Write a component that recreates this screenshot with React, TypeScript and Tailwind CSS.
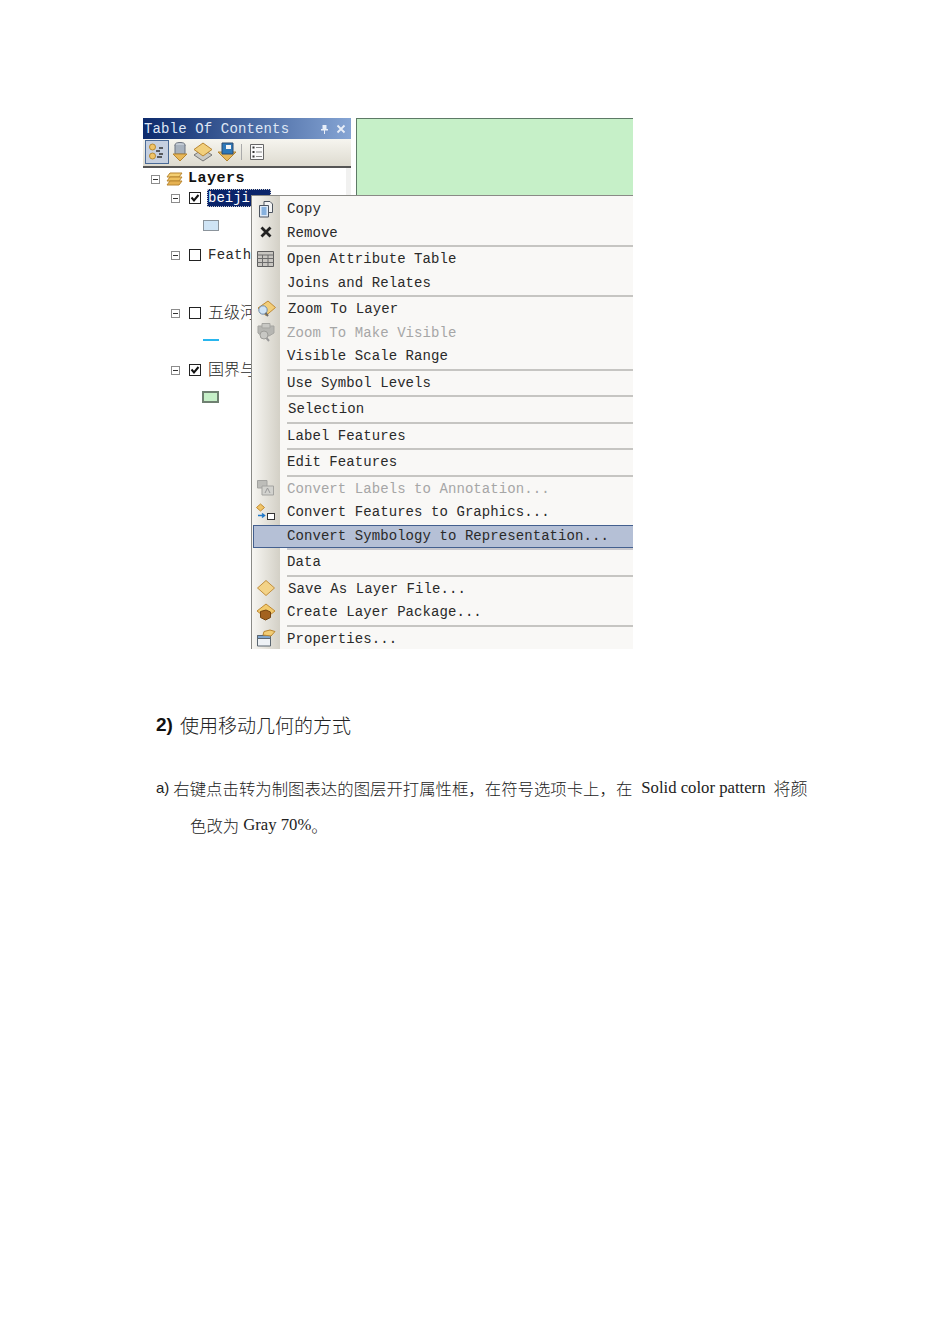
const mono = "font-['Liberation_Mono',monospace]";

function Plus() {
  return (
    <span className="flex h-[9px] w-[9px] items-center justify-center border border-[#8c8c8c] bg-white">
      <span className="h-px w-[5px] bg-[#333]" />
    </span>
  );
}

function Check({ on }: { on: boolean }) {
  return (
    <span className="flex h-[12px] w-[12px] items-center justify-center border border-[#222] bg-white">
      {on && (
        <svg width="10" height="10" viewBox="0 0 10 10">
          <path d="M1.5 4.5 L4 7.5 L8.5 2" fill="none" stroke="#111" strokeWidth="2" />
        </svg>
      )}
    </span>
  );
}

function TreeRow({ cls, on, children }: { cls: string; on: boolean; children: React.ReactNode }) {
  return (
    <div className={`flex items-center pl-[28px] ${cls}`}>
      <Plus />
      <span className="ml-[9px]"><Check on={on} /></span>
      <span className="ml-[7px] whitespace-nowrap">{children}</span>
    </div>
  );
}

const icons: Record<string, React.ReactNode> = {
  copy: (
    <svg width="18" height="18" viewBox="0 0 18 18">
      <path d="M7 1.5 H13 L15.5 4 V12.5 H7 Z" fill="#f3f3f3" stroke="#4d5560" />
      <path d="M2.5 5.5 H11.5 V17 H2.5 Z" fill="#dfeaf7" stroke="#4d5560" />
      <path d="M4.5 8 H9.5 M4.5 10 H9.5 M4.5 12 H9.5 M4.5 14 H9.5" stroke="#2f78c4" />
    </svg>
  ),
  remove: (
    <svg width="14" height="14" viewBox="0 0 14 14">
      <path d="M2.5 2.5 L11.5 11.5 M11.5 2.5 L2.5 11.5" stroke="#222" strokeWidth="2.8" />
    </svg>
  ),
  table: (
    <svg width="18" height="16" viewBox="0 0 18 16">
      <path d="M.5 .5 H16.5 V15.5 H.5 Z" fill="#c9c7c2" stroke="#5f5f5f" />
      <path d="M.5 4 H16.5 M.5 7.5 H16.5 M.5 11.5 H16.5 M5.5 4 V15.5 M11 4 V15.5" stroke="#6c6c6c" fill="none" />
    </svg>
  ),
  zoom: (
    <svg width="20" height="18" viewBox="0 0 20 18">
      <path d="M12 1 L19.5 7.5 L10 15.5 L2 8 Z" fill="#f2ce7a" stroke="#c08a34" />
      <circle cx="7" cy="10" r="4.2" fill="#cfe3f5" stroke="#6f8aa8" />
      <path d="M9.5 13 L12 16" stroke="#6a6a6a" strokeWidth="2" />
    </svg>
  ),
  zoomOff: (
    <svg width="20" height="20" viewBox="0 0 20 20">
      <path d="M2 4 H18 V11 L13 14 H6 L2 11 Z" fill="#b6b6b2" stroke="#a5a5a1" />
      <path d="M6 1.5 H14 V6 H6 Z" fill="#c8c8c4" stroke="#a5a5a1" />
      <circle cx="8" cy="13" r="4" fill="#c8c8c4" stroke="#9d9d99" />
      <path d="M10.5 16 L13 19" stroke="#999" strokeWidth="2" />
    </svg>
  ),
  annot: (
    <svg width="20" height="18" viewBox="0 0 20 18">
      <path d="M1.5 1.5 H11 V9 H1.5 Z" fill="#bdbdb9" stroke="#a3a3a0" />
      <path d="M6 7 H17.5 V16 H6 Z" fill="#d2d2ce" stroke="#a3a3a0" />
      <path d="M9 14 L11.5 9 L14 14" fill="none" stroke="#999" />
    </svg>
  ),
  graphics: (
    <svg width="20" height="18" viewBox="0 0 20 18">
      <path d="M4.5 1 L8.5 4.5 L4.5 8 L.5 4.5 Z" fill="#f0c468" stroke="#c08a30" />
      <path d="M2 12.5 H8 M6 10.5 L8.5 12.5 L6 14.5" fill="none" stroke="#1f78c8" strokeWidth="1.5" />
      <rect x="11.5" y="10.5" width="7" height="6" fill="#fff" stroke="#333" />
    </svg>
  ),
  save: (
    <svg width="20" height="18" viewBox="0 0 20 18">
      <path d="M10 1.5 L18.5 9 L10 16.5 L1.5 9 Z" fill="#f3d388" stroke="#c28f3c" />
    </svg>
  ),
  pkg: (
    <svg width="20" height="18" viewBox="0 0 20 18">
      <path d="M10 1 L19 8 L10 15 L1 8 Z" fill="#f2ca6c" stroke="#c08a34" />
      <path d="M4.5 8.5 L10 7 L14.5 9 V14.5 L9.5 17 L4.5 14.5 Z" fill="#a3621f" stroke="#74430f" />
    </svg>
  ),
  props: (
    <svg width="20" height="18" viewBox="0 0 20 18">
      <path d="M1.5 6.5 H14.5 V17 H1.5 Z" fill="#eef2f6" stroke="#5b6670" />
      <path d="M1.5 6.5 H14.5 V9.5 H1.5 Z" fill="#7fa5cc" stroke="#5b6670" />
      <path d="M8 2.5 L14 1 L19 2.5 L15 7 L7 6 Z" fill="#f2cd75" stroke="#b98631" />
    </svg>
  ),
};

type Item =
  | { sep: true; strong?: boolean }
  | { label: string; icon?: string; off?: boolean; hi?: boolean; dx?: boolean };

const items: Item[] = [
  { label: "Copy", icon: "copy" },
  { label: "Remove", icon: "remove" },
  { sep: true },
  { label: "Open Attribute Table", icon: "table" },
  { label: "Joins and Relates" },
  { sep: true },
  { label: "Zoom To Layer", icon: "zoom", dx: true },
  { label: "Zoom To Make Visible", icon: "zoomOff", off: true },
  { label: "Visible Scale Range" },
  { sep: true },
  { label: "Use Symbol Levels" },
  { sep: true },
  { label: "Selection", dx: true },
  { sep: true },
  { label: "Label Features" },
  { sep: true },
  { label: "Edit Features" },
  { sep: true },
  { label: "Convert Labels to Annotation...", icon: "annot", off: true },
  { label: "Convert Features to Graphics...", icon: "graphics" },
  { label: "Convert Symbology to Representation...", hi: true },
  { sep: true, strong: true },
  { label: "Data" },
  { sep: true },
  { label: "Save As Layer File...", icon: "save", dx: true },
  { label: "Create Layer Package...", icon: "pkg" },
  { sep: true },
  { label: "Properties...", icon: "props" },
];

function Menu() {
  return (
    <div className={`absolute left-[108px] top-[77px] h-[454px] w-[382px] overflow-hidden border-l border-t border-[#8a8a86] bg-[#f9f8f6] pt-[2px] text-[14px] tracking-[0.07px] text-[#2a2a2a] ${mono}`}>
      <div className="absolute bottom-0 left-0 top-0 w-[28px] bg-gradient-to-r from-[#f7f6f2] to-[#d3d0c6]" />
      <div className="relative">
        {items.map((it, i) =>
          "sep" in it ? (
            <div key={i} className="ml-[35px] flex h-[3px] items-start">
              <div className={`h-[2px] w-full ${it.strong ? "bg-[#c9c9cf]" : "bg-[#c6c5c2]"}`} />
            </div>
          ) : (
            <div
              key={i}
              className={`flex h-[23.5px] items-center whitespace-nowrap ${
                it.hi ? "ml-px border-y border-l border-[#44608f] bg-[#b5c0d6]" : ""
              } ${it.off ? "text-[#a6a6a6]" : ""}`}
            >
              <span className={`flex shrink-0 items-center justify-center pb-[2px] ${it.hi ? "w-[26px]" : "w-[28px]"}`}>
                {it.icon ? icons[it.icon] : null}
              </span>
              <span className={it.dx ? "ml-[8px]" : "ml-[7px]"}>{it.label}</span>
            </div>
          )
        )}
      </div>
    </div>
  );
}

function Toolbar() {
  return (
    <div className="flex h-[29px] items-center border-b-2 border-[#555] bg-gradient-to-b from-[#f6f5ef] to-[#dedbd0] pb-[2px] pl-[2px]">
      <span className="flex h-[24px] w-[24px] items-center justify-center border border-[#4a6a96] bg-[#c6d0e0]">
        <svg width="18" height="18" viewBox="0 0 18 18">
          <circle cx="4.5" cy="4" r="3" fill="#f0c468" stroke="#b88a30" />
          <circle cx="4.5" cy="13" r="3" fill="#f0c468" stroke="#b88a30" />
          <path d="M8 8 L12 8 M11 5 H15 M11 11 H15 M9 14 H14" stroke="#333" strokeWidth="1.4" />
        </svg>
      </span>
      <svg className="ml-[1px]" width="20" height="22" viewBox="0 0 20 22">
        <ellipse cx="10" cy="4" rx="5" ry="2.5" fill="#c4ccd6" stroke="#6d7480" />
        <path d="M5 4 V13 H15 V4" fill="#a8b2be" stroke="#6d7480" />
        <path d="M3 13 H17 L10 20 Z" fill="#e8b85a" stroke="#b58530" />
      </svg>
      <svg className="ml-[2px]" width="22" height="20" viewBox="0 0 22 20">
        <path d="M11 7 L20 13 L11 19 L2 13 Z" fill="#c9c9c4" stroke="#777" />
        <path d="M11 1 L20 7.5 L11 14 L2 7.5 Z" fill="#f1cf7c" stroke="#b98631" />
      </svg>
      <svg className="ml-[2px]" width="22" height="22" viewBox="0 0 22 22">
        <path d="M2 11 H20 L11 20 Z" fill="#e8b85a" stroke="#b58530" />
        <path d="M6 2 H17 V13 H6 Z" fill="#2e78b8" stroke="#2a4a70" />
        <path d="M10 4 H15 V8 H10 Z" fill="#f4f4f4" />
      </svg>
      <span className="ml-[3px] h-[16px] w-px bg-[#aaa]" />
      <svg className="ml-[8px]" width="14" height="16" viewBox="0 0 14 16">
        <path d="M.5 .5 H13.5 V15.5 H.5 Z" fill="#fafafa" stroke="#666" />
        <path d="M2.5 3.5 H4.5 M2.5 8 H4.5 M2.5 12.5 H4.5" stroke="#333" strokeWidth="2" />
        <path d="M6 3.5 H12 M6 8 H12 M6 12.5 H12" stroke="#888" />
      </svg>
    </div>
  );
}

function Toc() {
  return (
    <div className={`w-[208px] shrink-0 text-[#2a2a2a] ${mono}`}>
      <div className="flex h-[21px] items-center justify-between bg-gradient-to-r from-[#0d2a6c] to-[#86a5d4] pl-px pr-[5px] pt-[1px] text-[14px]">
        <span className="tracking-[0.14px] text-[#dfe7f5]">Table Of Contents</span>
        <span className="flex items-center gap-[7px]">
          <svg width="9" height="11" viewBox="0 0 9 11"><path d="M2.5 1 H6.5 V5 H8 V6.5 H5 V10 H4 V6.5 H1 V5 H2.5 Z" fill="#e8eef8" /></svg>
          <svg width="10" height="10" viewBox="0 0 10 10"><path d="M1.5 1.5 L8.5 8.5 M8.5 1.5 L1.5 8.5" stroke="#e8eef8" strokeWidth="1.8" /></svg>
        </span>
      </div>
      <Toolbar />
      <div className="h-[481px] border-r-[5px] border-[#f1f1f0] bg-white text-[14px]">
        <div className="flex h-[21px] items-center pl-[8px] pt-[1px]">
          <Plus />
          <svg className="ml-[6px]" width="17" height="14" viewBox="0 0 17 14">
            <path d="M4 1 H16 L13 5 H1 Z" fill="#f4cf72" stroke="#b98631" />
            <path d="M4 5 H16 L13 9 H1 Z" fill="#eec05e" stroke="#b98631" />
            <path d="M4 9 H16 L13 13 H1 Z" fill="#e6b252" stroke="#b98631" />
          </svg>
          <span className="ml-[5px] text-[15px] font-bold tracking-[0.5px] text-[#111]">Layers</span>
        </div>
        <TreeRow cls="h-[18px]" on>
          <span className="-mx-px inline-block border border-dotted border-[#ccc] bg-[#0a246a] pr-[20px] leading-[16px] text-white">beiji</span>
        </TreeRow>
        <div className="h-[38px] pl-[60px] pt-[13px]">
          <div className="h-[11px] w-[16px] border border-[#8b949c] bg-[#cfe4f5]" />
        </div>
        <TreeRow cls="h-[20px]" on={false}><span className="tracking-[0.3px]">Feathers</span></TreeRow>
        <div className="h-[38px]" />
        <TreeRow cls="h-[20px]" on={false}>
          <span className="inline-block pb-[4px] font-['Noto_Sans_CJK_SC',sans-serif] text-[16px] font-light">五级河流</span>
        </TreeRow>
        <div className="h-[37px] pl-[60px] pt-[16px]">
          <div className="h-[2px] w-[16px] bg-[#29b6ee]" />
        </div>
        <TreeRow cls="h-[20px]" on>
          <span className="inline-block pb-[4px] font-['Noto_Sans_CJK_SC',sans-serif] text-[16px] font-light">国界与海岸</span>
        </TreeRow>
        <div className="pl-[59px] pt-[11px]">
          <div className="h-[12px] w-[17px] border-2 border-[#6f8071] bg-[#c6f0c8]" />
        </div>
      </div>
    </div>
  );
}

export default function App() {
  return (
    <div className="h-[1344px] w-[950px] overflow-hidden bg-white pl-[143px] pt-[118px] text-[#111]">
      <div className="relative flex h-[531px] w-[490px] items-start">
        <Toc />
        <div className="ml-[5px] h-[77px] flex-1 border-l border-t border-[#5d7a66] bg-[#c6f0c8]" />
        <Menu />
      </div>
      <div className="-ml-[143px] mt-[61px] pl-[156px] font-['Liberation_Serif','Noto_Sans_CJK_SC',serif]">
        <div className="flex h-[30px] items-center text-[19px] text-[#222]">
          <b className="mr-[7px] font-['Liberation_Sans',sans-serif] text-[19px] text-[#111]">2)</b>
          <span className="font-['Noto_Sans_CJK_SC',sans-serif] font-light">使用移动几何的方式</span>
        </div>
        <div className="mt-[33px] flex h-[30px] items-center whitespace-nowrap text-[16.4px] text-[#222]">
          <span className="mr-[4px] font-['Liberation_Sans',sans-serif] text-[15px]">a)</span>
          <span className="font-['Noto_Sans_CJK_SC',sans-serif] font-light">右键点击转为制图表达的图层开打属性框，在符号选项卡上，在</span>
          <span className="ml-[9px] text-[16.7px]">Solid color pattern</span>
          <span className="ml-[8px] font-['Noto_Sans_CJK_SC',sans-serif] text-[17px] font-light">将颜</span>
        </div>
        <div className="mt-[7px] flex h-[30px] items-center whitespace-nowrap pl-[34px] text-[16.4px] text-[#222]">
          <span className="font-['Noto_Sans_CJK_SC',sans-serif] font-light">色改为</span>
          <span className="ml-[4px] text-[16.7px]">Gray 70%</span>
          <span className="font-['Noto_Sans_CJK_SC',sans-serif] font-light">。</span>
        </div>
      </div>
    </div>
  );
}
